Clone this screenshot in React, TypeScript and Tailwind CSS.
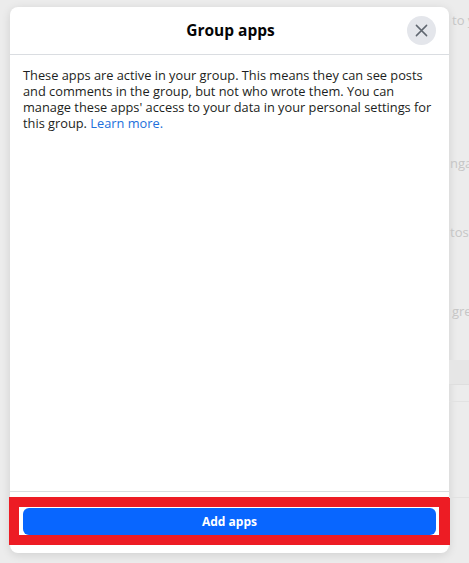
import React from "react";

const font = { fontFamily: '"Open Sans", "Noto Sans", Arial, sans-serif' };

export default function App() {
  return (
    <div
      className="flex h-[563px] w-[469px] items-start overflow-hidden bg-[#ececec]"
      style={font}
    >
      <div className="ml-[10px] mt-[7px] flex h-[546px] w-[439px] shrink-0 flex-col rounded-lg bg-white shadow-[0_2px_10px_rgba(0,0,0,0.12)]">
        <div className="grid h-[48px] shrink-0 grid-cols-[1fr_auto_1fr] items-center border-b border-[#dadde1]">
          <div />
          <div className="pl-[2px] text-[15.5px] font-bold text-[#050505]">Group apps</div>
          <div className="flex justify-end pr-[13px]">
            <button className="flex h-[29px] w-[29px] items-center justify-center rounded-full bg-[#e4e6eb]">
              <svg width="13" height="13" viewBox="0 0 14 14" fill="none">
                <path d="M1.5 1.5L12.5 12.5M12.5 1.5L1.5 12.5" stroke="#606770" strokeWidth="1.6" strokeLinecap="round" />
              </svg>
            </button>
          </div>
        </div>
        <div className="flex-1 px-[13px] pt-[12px]">
          <p className="text-[12.8px] leading-[16px] text-[#1c1e21]">
            These apps are active in your group. This means they can see posts and comments in the group, but not who wrote them. You can manage these apps' access to your data in your personal settings for this group.{" "}
            <span className="text-[#216fdb]">Learn more.</span>
          </p>
        </div>
        <div className="shrink-0 border-t border-[#dadde1] pb-[8px] pt-[5px]">
          <div className="-ml-[1px] h-[48px] w-[441px] border-[10px] border-r-[11px] border-[#ed1c24] bg-white pb-0 pl-[4px] pr-[3px] pt-[1px]">
            <button className="flex h-[27px] w-full items-center justify-center rounded-[6px] bg-[#0866ff] pt-[1px] text-[12px] font-bold text-white">
              Add apps
            </button>
          </div>
        </div>
      </div>
      <div className="flex h-full min-w-0 flex-1 flex-col overflow-hidden whitespace-nowrap pl-[3px] text-[13px] leading-[16px] text-[#c6c6c6]">
        <div className="mt-[12px]">to your</div>
        <div className="-ml-[2px] mt-[127px]">nga</div>
        <div className="-ml-[2px] mt-[53px]">tos a</div>
        <div className="mt-[63px]">gre</div>
        <div className="-ml-[3px] mt-[41px] h-[25px] border-b border-[#dedede] bg-[#e6e6e6]" />
        <div className="-ml-[3px] mt-[16px] border-b border-[#e2e2e2]" />
        <div className="-ml-[3px] mt-[95px] border-b border-[#e2e2e2]" />
      </div>
    </div>
  );
}
